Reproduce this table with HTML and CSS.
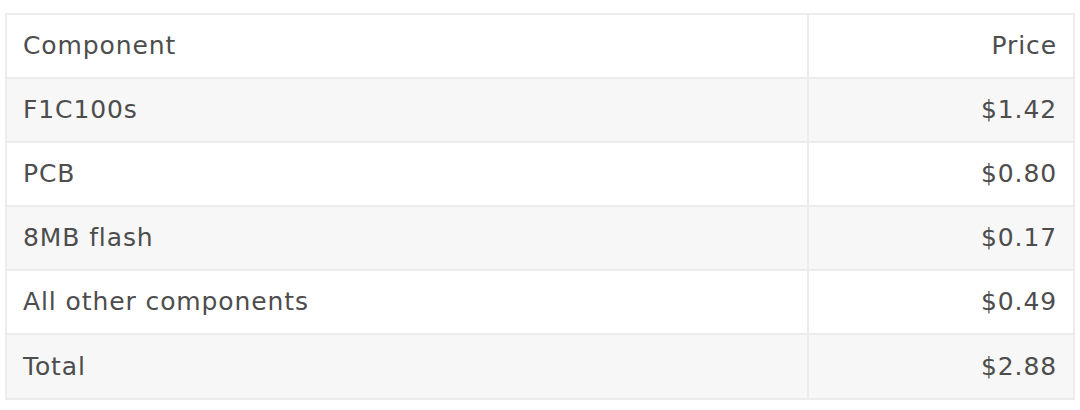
FILE: index.html
```html
<!DOCTYPE html>
<html lang="en">
<head>
<meta charset="utf-8">
<title>Component prices</title>
<link rel="stylesheet" href="styles.css">
</head>
<body>
<table class="price-table">
  <colgroup>
    <col class="col-name">
    <col class="col-price">
  </colgroup>
  <thead>
    <tr><th class="name">Component</th><th class="price">Price</th></tr>
  </thead>
  <tbody>
    <tr><td class="name">F1C100s</td><td class="price">$1.42</td></tr>
    <tr><td class="name">PCB</td><td class="price">$0.80</td></tr>
    <tr><td class="name">8MB flash</td><td class="price">$0.17</td></tr>
    <tr><td class="name">All other components</td><td class="price">$0.49</td></tr>
    <tr><td class="name">Total</td><td class="price">$2.88</td></tr>
  </tbody>
</table>
</body>
</html>
```
FILE: styles.css
```css
html, body {
  margin: 0;
  background: #ffffff;
}
body {
  padding: 13px 5px 0 5px;
  font-family: "DejaVu Sans", Inter, sans-serif;
  color: #4d4d4d;
}
.price-table {
  width: 1070px;
  border-collapse: collapse;
  table-layout: fixed;
  font-size: 25px;
  letter-spacing: 0.9px;
}
.col-name { width: 802px; }
.price-table th,
.price-table td {
  border: 2px solid #ececec;
  height: 62.1px;
  padding: 0 16px;
  font-weight: normal;
  line-height: 28px;
}
.price-table .name { text-align: left; }
.price-table .price { text-align: right; }
.price-table tbody tr:nth-child(odd) { background: #f7f7f7; }
.price-table thead tr { background: #ffffff; }
```
